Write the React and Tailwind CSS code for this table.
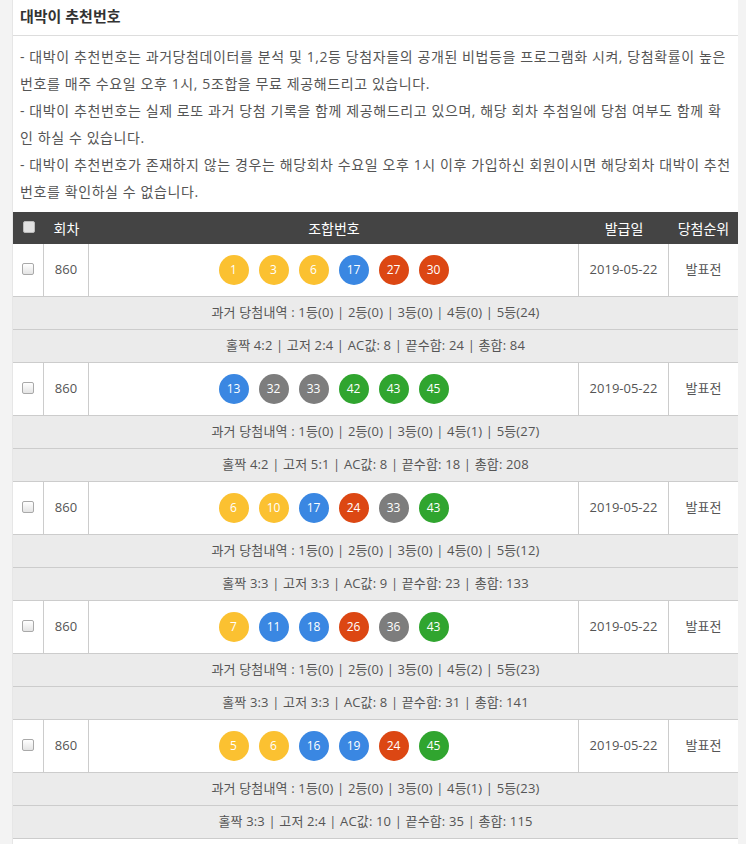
const ROWS = [
  { round: 860, nums: [1, 3, 6, 17, 27, 30], past: [0, 0, 0, 0, 24], stats: ['4:2', '2:4', 8, 24, 84] },
  { round: 860, nums: [13, 32, 33, 42, 43, 45], past: [0, 0, 0, 1, 27], stats: ['4:2', '5:1', 8, 18, 208] },
  { round: 860, nums: [6, 10, 17, 24, 33, 43], past: [0, 0, 0, 0, 12], stats: ['3:3', '3:3', 9, 23, 133] },
  { round: 860, nums: [7, 11, 18, 26, 36, 43], past: [0, 0, 0, 2, 23], stats: ['3:3', '3:3', 8, 31, 141] },
  { round: 860, nums: [5, 6, 16, 19, 24, 45], past: [0, 0, 0, 1, 23], stats: ['3:3', '2:4', 10, 35, 115] },
]

function ballColor(n) {
  if (n <= 10) return 'bg-[#fbc131]'
  if (n <= 20) return 'bg-[#3a87e2]'
  if (n <= 30) return 'bg-[#dc4713]'
  if (n <= 40) return 'bg-[#7d7d7d]'
  return 'bg-[#30a52f]'
}

function Checkbox({ header }) {
  return (
    <span
      className={
        header
          ? 'block w-[12px] h-[12px] rounded-[2px] border border-[#bbb] bg-[#e2e2e2]'
          : 'block w-[12px] h-[12px] rounded-[2px] border border-[#a9a9a9] bg-gradient-to-b from-white to-[#e4e4e4]'
      }
    />
  )
}

function Ball({ n }) {
  return (
    <span className={`w-[30px] h-[30px] rounded-full flex items-center justify-center text-white text-[12px] ${ballColor(n)}`}>
      {n}
    </span>
  )
}

export default function App() {
  return (
    <div className="min-h-screen bg-[#f3f3f3] flex font-['Open_Sans','Noto_Sans_CJK_KR',sans-serif]">
      <div className="ml-[12px] w-[726px] bg-white border-l border-[#e6e6e6]">

        {/* title */}
        <div className="h-[36px] border-b border-[#ddd] px-[7px] pt-[6px] leading-[20px] text-[15px] font-bold text-[#333]">
          대박이 추천번호
        </div>

        {/* notice */}
        <div className="px-[7px] pt-[7px] text-[14px] leading-[27px] tracking-[0.6px] text-[#555]">
          <p>- 대박이 추천번호는 과거당첨데이터를 분석 및 1,2등 당첨자들의 공개된 비법등을 프로그램화 시켜, 당첨확률이 높은 번호를 매주 수요일 오후 1시, 5조합을 무료 제공해드리고 있습니다.</p>
          <p>- 대박이 추천번호는 실제 로또 과거 당첨 기록을 함께 제공해드리고 있으며, 해당 회차 추첨일에 당첨 여부도 함께 확인 하실 수 있습니다.</p>
          <p>- 대박이 추천번호가 존재하지 않는 경우는 해당회차 수요일 오후 1시 이후 가입하신 회원이시면 해당회차 대박이 추천번호를 확인하실 수 없습니다.</p>
        </div>

        {/* table */}
        <div className="mt-[7px]">
          <div className="flex h-[32px] bg-[#444] text-white text-[14px]">
            <div className="w-[31px] flex items-center justify-center pb-[3px]"><Checkbox header /></div>
            <div className="w-[45px] flex items-center justify-center">회차</div>
            <div className="w-[490px] flex items-center justify-center">조합번호</div>
            <div className="w-[90px] flex items-center justify-center">발급일</div>
            <div className="flex-1 flex items-center justify-center">당첨순위</div>
          </div>

          {ROWS.map((r, i) => (
            <div key={i}>
              <div className="flex h-[53px] border-b border-[#ccc] text-[13px] text-[#555]">
                <div className="w-[31px] border-r border-[#ccc] flex justify-center pt-[19px]"><Checkbox /></div>
                <div className="w-[45px] border-r border-[#ccc] flex items-center justify-center">{r.round}</div>
                <div className="w-[490px] border-r border-[#ccc] flex items-center justify-center gap-[10px]">
                  {r.nums.map((n, j) => <Ball key={j} n={n} />)}
                </div>
                <div className="w-[90px] border-r border-[#ccc] flex items-center justify-center">2019-05-22</div>
                <div className="flex-1 flex items-center justify-center">발표전</div>
              </div>
              <div className="h-[33px] bg-[#ebebeb] border-b border-[#ccc] flex items-center justify-center text-[13px] tracking-[0.15px] text-[#555]">
                과거 당첨내역 : {r.past.map((c, k) => `${k + 1}등(${c})`).join(' | ')}
              </div>
              <div className="h-[33px] bg-[#ebebeb] border-b border-[#ccc] flex items-center justify-center text-[13px] tracking-[0.15px] text-[#555]">
                홀짝 {r.stats[0]} | 고저 {r.stats[1]} | AC값: {r.stats[2]} | 끝수합: {r.stats[3]} | 총합: {r.stats[4]}
              </div>
            </div>
          ))}
        </div>

      </div>
    </div>
  )
}
